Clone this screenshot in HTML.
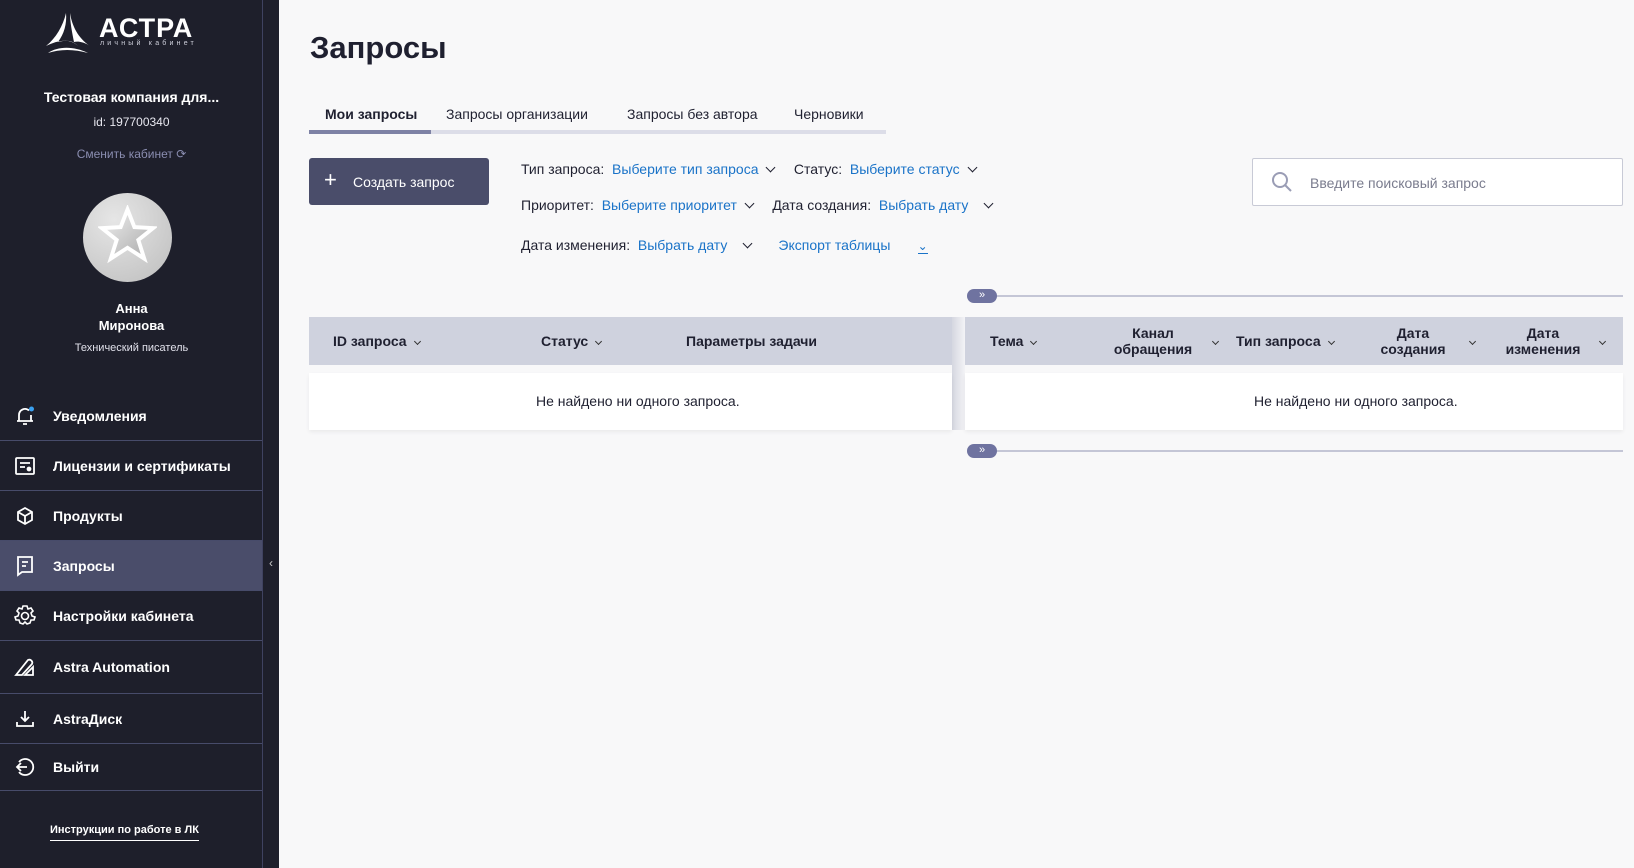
<!DOCTYPE html>
<html><head><meta charset="utf-8"><style>
*{box-sizing:border-box;margin:0;padding:0}
body{width:1634px;height:868px;overflow:hidden;background:#f8f8f9;font-family:"Liberation Sans",sans-serif;color:#1f2030;position:relative}
.sb{position:absolute;left:0;top:0;width:279px;height:868px;background:#1e1f2b}
.sb .edge{position:absolute;left:262px;top:0;width:1px;height:868px;background:#3f4260}
.c{position:absolute;left:0;width:263px;text-align:center;color:#fff}
.mi{position:absolute;left:0;width:262px;height:50px;border-bottom:1px solid #474b6a;color:#fff;font-weight:bold;font-size:14px;display:flex;align-items:center}
.mi svg{position:absolute;left:13px;top:50%;margin-top:-12px}
.mi span{position:absolute;left:53px}
.abs{position:absolute;white-space:nowrap}
.f{font-size:14px;color:#1f2030}
.b{color:#1a73c8}
.chev{display:inline-block;width:7px;height:7px;border-right:1.6px solid #1f2030;border-bottom:1.6px solid #1f2030;transform:rotate(45deg);margin-left:9px;position:relative;top:-3px}
.sc{display:inline-block;width:5px;height:5px;border-right:1px solid #333;border-bottom:1px solid #333;transform:rotate(45deg);margin-left:8px;position:relative;top:-2px}
.th{font-size:14px;font-weight:bold;color:#1f2030;position:absolute;white-space:nowrap;text-align:center;line-height:16px}
.pill{position:absolute;width:30px;height:14px;border-radius:7px;background:#6f73a0;color:#fff;font-size:11px;line-height:13px;text-align:center}
.ln{position:absolute;height:2px;background:#c4c6d6}
</style></head><body>
<div class="sb">
 <div class="edge"></div>
 <svg class="abs" style="left:44px;top:12px" width="48" height="42" viewBox="0 0 48 42"><path d="M22 1 C19 14 12 26 2 34 C14 28 26 26 34 34 C28 28 22 28 14 30 C20 22 23 12 22 1Z" fill="#fff"/><path d="M26 1 C28 14 34 26 46 34 C40 30 34 29 30 30 C28 20 26 10 26 1Z" fill="#fff"/><path d="M4 41 C14 34 30 34 44 41 C30 37 16 37 4 41Z" fill="#fff"/></svg>
 <div class="abs" style="left:99px;top:13px;color:#fff;font-weight:bold;font-size:27px;letter-spacing:1px">АСТРА</div>
 <div class="abs" style="left:100px;top:40px;color:#cfd0dc;font-size:7px;letter-spacing:3.2px">личный кабинет</div>
 <div class="c" style="top:89px;font-weight:bold;font-size:14px">Тестовая компания для...</div>
 <div class="c" style="top:115px;font-size:12px;color:#e8e8f0">id: 197700340</div>
 <div class="c" style="top:147px;font-size:12px;color:#8a8db0">Сменить кабинет ⟳</div>
 <div class="abs" style="left:83px;top:193px;width:89px;height:89px;border-radius:50%;background:radial-gradient(circle at 35% 30%,#e6e6e6,#bdbdbd)"></div>
 <svg class="abs" style="left:98px;top:205px" width="59" height="60" viewBox="0 0 60 60"><defs><linearGradient id="g" x1="0" y1="0" x2="1" y2="1"><stop offset="0" stop-color="#f2f2f2"/><stop offset="1" stop-color="#a8a8a8"/></linearGradient></defs><polygon points="30,4 37,22 56,23 41,35 47,54 30,43 13,54 19,35 4,23 23,22" fill="url(#g)" stroke="#fff" stroke-width="4"/></svg>
 <div class="c" style="top:300px;font-weight:bold;font-size:13px;line-height:17px">Анна<br>Миронова</div>
 <div class="c" style="top:342px;font-size:11px;color:#e0e0ea">Технический писатель</div>
 <div class="mi" style="top:391px"><svg width="24" height="24" viewBox="0 0 24 24" fill="none" stroke="#fff" stroke-width="1.8"><path d="M6 17 V11 a6 6 0 0 1 10-4.5 M18 11v6 M4 17h16 M10 20h4"/><circle cx="18.5" cy="5" r="2.5" fill="#3aa0f0" stroke="none"/></svg><span>Уведомления</span></div>
 <div class="mi" style="top:441px"><svg width="24" height="24" viewBox="0 0 24 24" fill="none" stroke="#fff" stroke-width="1.8"><rect x="3" y="4" width="18" height="16" rx="1"/><path d="M7 9h10 M7 13h5"/><circle cx="16" cy="15" r="1.5" fill="#fff"/></svg><span>Лицензии и сертификаты</span></div>
 <div class="mi" style="top:491px"><svg width="24" height="24" viewBox="0 0 24 24" fill="none" stroke="#fff" stroke-width="1.8"><path d="M12 4 L19 8 V16 L12 20 L5 16 V8Z M5 8 L12 12 L19 8 M12 12 V20"/></svg><span>Продукты</span></div>
 <div class="mi" style="top:541px;background:#4a4d6a"><svg width="24" height="24" viewBox="0 0 24 24" fill="none" stroke="#fff" stroke-width="1.8"><path d="M5 3h14v15h-10l-4 3z M9 8h6 M9 12h4"/></svg><span>Запросы</span></div>
 <div class="mi" style="top:591px"><svg width="24" height="24" viewBox="0 0 24 24" fill="none" stroke="#fff" stroke-width="1.6"><circle cx="12" cy="12" r="3.5"/><path d="M10 2h4l1 3 3-1 2 3-2 2 1 3 3 1-1 3-3 0-1 3-3 1-2-2-2 2-3-1-1-3-3 0-1-3 3-1 1-3-2-2 2-3 3 1z"/></svg><span>Настройки кабинета</span></div>
 <div class="mi" style="top:641px;height:53px"><svg width="24" height="24" viewBox="0 0 24 24" fill="none" stroke="#fff" stroke-width="1.8"><path d="M3 20 L15 5 a3 3 0 0 1 4 4 L9 20Z M12 20 L20 12 V20Z"/></svg><span>Astra Automation</span></div>
 <div class="mi" style="top:694px"><svg width="24" height="24" viewBox="0 0 24 24" fill="none" stroke="#fff" stroke-width="1.8"><path d="M12 4v10 M8 10l4 4 4-4 M4 15v4h16v-4"/></svg><span>AstraДиск</span></div>
 <div class="mi" style="top:744px;height:47px"><svg width="24" height="24" viewBox="0 0 24 24" fill="none" stroke="#fff" stroke-width="1.8"><path d="M6 7 a8 8 0 1 1 0 10 M4 12h10 M8 8l-4 4 4 4"/></svg><span>Выйти</span></div>
 <div class="abs" style="left:50px;top:824px;color:#fff;font-size:11px;font-weight:bold;border-bottom:1.5px solid #fff;padding-bottom:4px">Инструкции по работе в ЛК</div>
 <div class="abs" style="left:269px;top:556px;color:#ccc;font-size:12px">‹</div>
</div>

<div class="abs" style="left:310px;top:30px;font-size:31px;font-weight:bold;color:#1f2030">Запросы</div>
<div class="abs" style="left:309px;top:130px;width:577px;height:4px;background:#dcdde8"></div>
<div class="abs" style="left:309px;top:130px;width:122px;height:4px;background:#7e82a5"></div>
<div class="abs f" style="left:325px;top:106px;font-weight:bold">Мои запросы</div>
<div class="abs f" style="left:446px;top:106px">Запросы организации</div>
<div class="abs f" style="left:627px;top:106px">Запросы без автора</div>
<div class="abs f" style="left:794px;top:106px">Черновики</div>

<div class="abs" style="left:309px;top:158px;width:180px;height:47px;background:#4a4d6a;border-radius:3px;color:#fff;font-size:14px"><span style="position:absolute;left:15px;top:9px;font-size:22px">+</span><span style="position:absolute;left:44px;top:16px">Создать запрос</span></div>

<div class="abs f" style="left:521px;top:161px">Тип запроса:&nbsp; <span class="b">Выберите тип запроса</span><span class="chev"></span>&nbsp;&nbsp;&nbsp;&nbsp; Статус:&nbsp; <span class="b">Выберите статус</span><span class="chev"></span></div>
<div class="abs f" style="left:521px;top:197px">Приоритет:&nbsp; <span class="b">Выберите приоритет</span><span class="chev"></span>&nbsp;&nbsp;&nbsp;&nbsp; Дата создания:&nbsp; <span class="b">Выбрать дату</span>&nbsp;&nbsp;<span class="chev"></span></div>
<div class="abs f" style="left:521px;top:237px">Дата изменения:&nbsp; <span class="b">Выбрать дату</span>&nbsp;&nbsp;<span class="chev"></span>&nbsp;&nbsp;&nbsp;&nbsp;&nbsp;&nbsp; <span class="b">Экспорт таблицы</span>&nbsp;&nbsp;&nbsp;&nbsp;&nbsp;&nbsp; <span class="b" style="font-size:12px;border-bottom:1.5px solid #1a73c8">⌄</span></div>

<div class="abs" style="left:1252px;top:158px;width:371px;height:48px;background:#fff;border:1px solid #c8cad6;border-radius:2px">
 <svg class="abs" style="left:18px;top:12px" width="22" height="22" viewBox="0 0 22 22" fill="none" stroke="#9a9db5" stroke-width="2"><circle cx="9" cy="9" r="7"/><path d="M14 14l6 6"/></svg>
 <div class="abs" style="left:57px;top:16px;font-size:14px;color:#7a7c8e">Введите поисковый запрос</div>
</div>

<div class="ln" style="left:980px;top:295px;width:643px"></div>
<div class="pill" style="left:967px;top:289px">»</div>
<div class="ln" style="left:980px;top:450px;width:643px"></div>
<div class="pill" style="left:967px;top:444px">»</div>

<div class="abs" style="left:309px;top:317px;width:1314px;height:48px;background:#cfd2de"></div>
<div class="abs" style="left:952px;top:317px;width:13px;height:113px;background:linear-gradient(90deg,#d5d7e0,#f3f3f6)"></div>
<div class="abs" style="left:309px;top:373px;width:643px;height:57px;background:#fff;box-shadow:0 2px 4px rgba(0,0,0,.06)"></div>
<div class="abs" style="left:965px;top:373px;width:658px;height:57px;background:#fff;box-shadow:0 2px 4px rgba(0,0,0,.06)"></div>
<div class="abs f" style="left:536px;top:393px">Не найдено ни одного запроса.</div>
<div class="abs f" style="left:1254px;top:393px">Не найдено ни одного запроса.</div>

<div class="th" style="left:333px;top:333px">ID запроса<span class="sc"></span></div>
<div class="th" style="left:541px;top:333px">Статус<span class="sc"></span></div>
<div class="th" style="left:686px;top:333px">Параметры задачи</div>
<div class="th" style="left:990px;top:333px">Тема<span class="sc"></span></div>
<div class="th" style="left:1110px;top:325px;width:86px">Канал<br>обращения</div><div class="th" style="left:1205px;top:333px"><span class="sc"></span></div>
<div class="th" style="left:1236px;top:333px">Тип запроса<span class="sc"></span></div>
<div class="th" style="left:1375px;top:325px;width:76px">Дата<br>создания</div><div class="th" style="left:1462px;top:333px"><span class="sc"></span></div>
<div class="th" style="left:1500px;top:325px;width:86px">Дата<br>изменения</div><div class="th" style="left:1592px;top:333px"><span class="sc"></span></div>
</body></html>
